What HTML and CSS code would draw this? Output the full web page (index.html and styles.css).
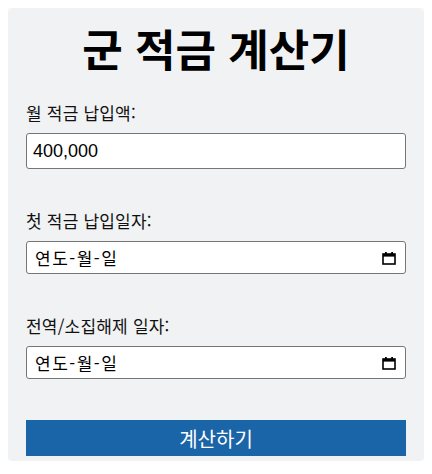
FILE: index.html
```html
<!DOCTYPE html>
<html lang="ko">
<head>
<meta charset="utf-8">
<title>군 적금 계산기</title>
<link rel="stylesheet" href="styles.css">
</head>
<body>
<div class="card">
  <h1 class="title">군 적금 계산기</h1>
  <div class="field">
    <label class="label" for="amount">월 적금 납입액:</label>
    <input class="text-input" id="amount" type="text" value="400,000">
  </div>
  <div class="field">
    <label class="label">첫 적금 납입일자:</label>
    <div class="date-input"><span class="date-text">연도-월-일</span><svg class="cal" width="14" height="14" viewBox="0 0 14 14"><rect x="1" y="3" width="12" height="10" fill="none" stroke="#000" stroke-width="1.6"/><rect x="1" y="3" width="12" height="2.6" fill="#000"/><rect x="3" y="1" width="1.8" height="3" fill="#000"/><rect x="9.2" y="1" width="1.8" height="3" fill="#000"/></svg></div>
  </div>
  <div class="field">
    <label class="label">전역/소집해제 일자:</label>
    <div class="date-input"><span class="date-text">연도-월-일</span><svg class="cal" width="14" height="14" viewBox="0 0 14 14"><rect x="1" y="3" width="12" height="10" fill="none" stroke="#000" stroke-width="1.6"/><rect x="1" y="3" width="12" height="2.6" fill="#000"/><rect x="3" y="1" width="1.8" height="3" fill="#000"/><rect x="9.2" y="1" width="1.8" height="3" fill="#000"/></svg></div>
  </div>
  <button class="btn" type="button">계산하기</button>
</div>
</body>
</html>
```
FILE: styles.css
```css
* { box-sizing: border-box; }
body {
  margin: 8px;
  background: #ffffff;
  font-family: "Noto Sans CJK KR", "Noto Sans", sans-serif;
  color: #111;
}
.card {
  background: #f1f2f4;
  border-radius: 8px;
  box-shadow: 0 0 6px rgba(0,0,0,0.12);
  padding: 14px 18px 5px;
  display: flex;
  flex-direction: column;
}
.title {
  margin: 0 0 27px;
  font-size: 44px;
  line-height: 52px;
  font-weight: 700;
  text-align: center;
  color: #000;
}
.field {
  display: flex;
  flex-direction: column;
  margin-bottom: 40px;
}
.field:nth-of-type(3) { margin-bottom: 41px; }
.label {
  font-size: 17px;
  line-height: 24px;
  margin-bottom: 8px;
  letter-spacing: 0.2px;
}
.text-input {
  height: 36px;
  border: 1px solid #767676;
  border-radius: 3px;
  padding: 0 6px;
  font-family: "Liberation Sans", Arial, sans-serif;
  font-size: 18px;
  color: #000;
  background: #fff;
}
.date-input {
  height: 33px;
  border: 1px solid #767676;
  border-radius: 3px;
  background: #fff;
  display: flex;
  align-items: center;
  justify-content: space-between;
  padding: 0 9px 0 8px;
}
.date-text {
  font-size: 17px;
  color: #000;
  letter-spacing: 1.5px;
}
.cal { display: block; }
.btn {
  height: 36px;
  border: none;
  border-radius: 0;
  background: #1a64a8;
  color: #fff;
  font-family: "Noto Sans CJK KR", sans-serif;
  font-size: 20px;
  padding: 0;
}
```
